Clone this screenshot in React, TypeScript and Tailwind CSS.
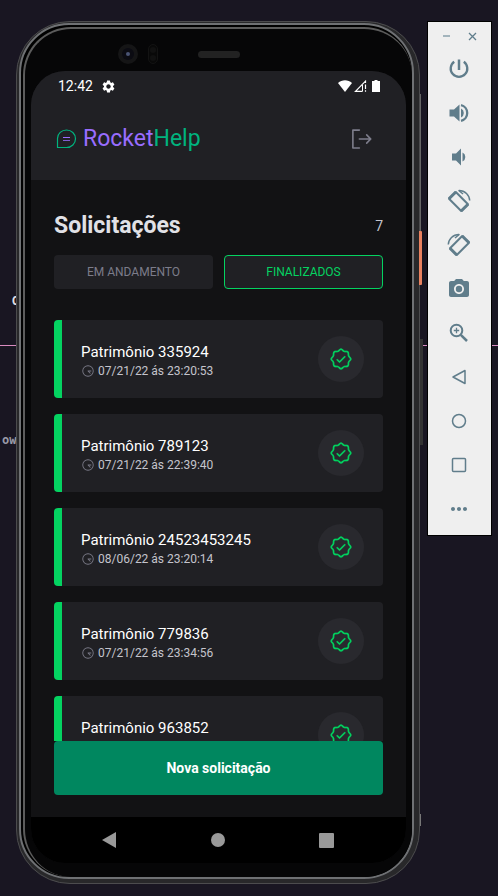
import type { ReactNode } from "react";
import { MdMoreHoriz, MdPhotoCamera, MdSettings } from "react-icons/md";
import { PiClockAfternoon, PiSealCheck, PiSignOut } from "react-icons/pi";

type Order = { id: string; patrimony: string; when: string };

const orders: Order[] = [
  { id: "1", patrimony: "335924", when: "07/21/22 ás 23:20:53" },
  { id: "2", patrimony: "789123", when: "07/21/22 ás 22:39:40" },
  { id: "3", patrimony: "24523453245", when: "08/06/22 ás 23:20:14" },
  { id: "4", patrimony: "779836", when: "07/21/22 ás 23:34:56" },
  { id: "5", patrimony: "963852", when: "07/21/22 ás 23:41:12" },
];

function Logo() {
  return (
    <div className="flex items-center gap-[6px]">
      <svg width="21" height="20" viewBox="0 0 21 20" fill="none" aria-hidden="true">
        <path
          d="M1.500 18.500V9.500C1.500 4.600 5.600 1 10.500 1S19.500 4.700 19.500 9.700s-4 8.800-9 8.800z"
          stroke="#00B37E"
          strokeWidth="1.200"
          strokeLinejoin="round"
        />
        <path d="M7 8.500h7" stroke="#996DFF" strokeWidth="1.200" />
        <path d="M7 11.500h7" stroke="#996DFF" strokeWidth="1.200" opacity="0.8" />
      </svg>
      <span className="text-[23px] leading-7 text-[#996DFF]">
        Rocket<span className="text-[#00B37E]">Help</span>
      </span>
    </div>
  );
}

function StatusBar() {
  return (
    <div className="flex h-[30px] items-center justify-between pr-[26px] pl-[27px] text-white">
      <div className="flex items-center gap-2">
        <span className="text-sm">12:42</span>
        <MdSettings size={15} />
      </div>
      <div className="flex items-center gap-[2px]">
        <svg width="14" height="12" viewBox="0 0 14 12" fill="#fff" aria-hidden="true">
          <path d="M7 12 0 3C4 -.7 10 -.7 14 3z" />
        </svg>
        <svg width="13" height="12" viewBox="0 0 13 12" fill="none" aria-hidden="true">
          <path d="M8.500 11.300H1.500L11.500 1.200V3" stroke="#fff" strokeWidth="1.200" />
          <path d="M8.500 11.300V5" stroke="#fff" />
          <path d="M11.500 4.500v4.500M11.500 10.200v1.500" stroke="#fff" strokeWidth="1.200" />
        </svg>
        <svg className="ml-[3px]" width="8" height="12" viewBox="0 0 8 12" fill="#fff" aria-hidden="true">
          <path d="M2.500 0h3v1H8v11H0V1h2.500z" />
        </svg>
      </div>
    </div>
  );
}

function OrderCard({ order }: { order: Order }) {
  return (
    <li className="shrink-0">
      <button className="flex w-full items-center overflow-hidden rounded border-l-8 border-[#04D361] bg-[#202024] pt-[22px] pr-[19px] pb-[18px] pl-[19px] text-left">
        <span className="flex-1">
          <span className="block text-[15px] leading-5 text-white">Patrimônio {order.patrimony}</span>
          <span className="flex items-center gap-[3px] text-xs leading-[18px] text-[#C4C4CC]">
            <PiClockAfternoon size={14} className="text-[#7C7C8A]" />
            {order.when}
          </span>
        </span>
        <span className="-mt-4 -mb-3 flex size-[46px] items-center justify-center rounded-full bg-[#29292E]">
          <PiSealCheck size={24} className="text-[#04D361]" stroke="currentColor" strokeWidth={2} />
        </span>
      </button>
    </li>
  );
}

function AppScreen() {
  return (
    <div className="flex min-h-0 flex-1 flex-col overflow-hidden rounded-[34px] bg-[#121214]">
      <header className="bg-[#202024]">
        <StatusBar />
        <div className="flex items-center justify-between pt-6 pr-8 pb-[27px] pl-[25px]">
          <Logo />
          <button aria-label="Sair" className="text-[#7C7C8A]">
            <PiSignOut size={26} />
          </button>
        </div>
      </header>

      <main className="flex min-h-0 flex-1 flex-col px-[23px] pt-7 pb-[22px]">
        <div className="flex items-center justify-between">
          <h1 className="text-[23px] leading-9 font-bold text-[#E1E1E6]">Solicitações</h1>
          <span className="text-sm text-[#C4C4CC]">7</span>
        </div>
        <div className="mt-[11px] grid grid-cols-2 gap-[11px] text-xs">
          <button className="h-[34px] rounded bg-[#202024] text-[#7C7C8A]">EM ANDAMENTO</button>
          <button className="h-[34px] rounded border border-[#04D361] bg-[#202024] text-[#04D361]">
            FINALIZADOS
          </button>
        </div>
        <ul className="mt-[31px] flex min-h-0 flex-1 flex-col gap-4 overflow-hidden">
          {orders.map((o) => (
            <OrderCard key={o.id} order={o} />
          ))}
        </ul>
        <button className="h-[54px] shrink-0 rounded bg-[#00875F] text-sm font-bold text-white">
          Nova solicitação
        </button>
      </main>

      <nav className="grid h-[46px] shrink-0 grid-cols-3 place-items-center bg-black pr-[25px] pl-6">
        <button aria-label="Voltar">
          <svg width="14" height="16" viewBox="0 0 14 16" fill="#999">
            <path d="M14 0v16L0 8z" />
          </svg>
        </button>
        <button aria-label="Início" className="size-[14px] rounded-full bg-[#999]" />
        <button aria-label="Recentes" className="size-[15px] rounded-[1px] bg-[#999]" />
      </nav>
    </div>
  );
}

function Phone() {
  return (
    <div className="relative flex min-w-0 flex-1">
      {/* side keys */}
      <div className="absolute top-[73px] right-0 h-[137px] w-px bg-[#666]" />
      <div className="absolute top-[210px] -right-px h-[54px] w-[3px] rounded-r-[1px] bg-[#E9815F]" />
      <div className="absolute top-[318px] -right-[2px] h-[106px] w-[3px] bg-[#333]" />
      <div className="absolute right-0 bottom-[58px] h-3 w-px bg-[#777]" />
      <div className="mr-px flex flex-1 flex-col rounded-[54px] border border-[#4c4c4e] bg-[#28282a] pt-px pr-[5px] pb-1 pl-[2px]">
        <div className="flex min-h-0 flex-1 flex-col rounded-[50px] border-2 border-[#6f7174] bg-black pt-[2px] pl-[2px]">
          <div className="flex min-h-0 flex-1 flex-col rounded-[48px] border-t-2 border-l-2 border-[#5c5c5c] bg-[#060607] pr-[6px] pb-[14px] pl-[6px]">
            <div className="grid h-[42px] shrink-0 grid-cols-[1fr_auto_1fr] items-center gap-10 pt-2">
              <div className="flex items-center justify-end gap-[10px]">
                <div className="flex size-5 items-center justify-center rounded-full bg-[#151516]">
                  <div className="flex size-3 items-center justify-center rounded-full bg-[#0b0b12]">
                    <div className="size-1 rounded-full bg-[#4a5474]" />
                  </div>
                </div>
                <div className="flex h-5 w-[10px] flex-col items-center justify-between rounded-full border border-[#131313] bg-[#090909] py-[2px]">
                  <div className="size-[6px] rounded-full bg-[#111]" />
                  <div className="size-[6px] rounded-full bg-[#111]" />
                </div>
              </div>
              <div className="h-[7px] w-[42px] rounded-full bg-[#222]" />
            </div>
            <AppScreen />
          </div>
        </div>
      </div>
    </div>
  );
}

function Glyph({ children }: { children: ReactNode }) {
  return (
    <svg width="24" height="24" viewBox="0 0 24 24" fill="none" stroke="currentColor" strokeWidth="2">
      {children}
    </svg>
  );
}

function RotateIcon({ flip }: { flip?: boolean }) {
  return (
    <svg
      width="24"
      height="24"
      viewBox="0 0 24 24"
      fill="none"
      stroke="currentColor"
      className={flip ? "-scale-x-100" : undefined}
    >
      <path d="M8.800 3 21 15.200 14.200 22 2 9.800z" strokeWidth="2" strokeLinejoin="round" />
      <path d="M8.800 3 2 9.800" strokeWidth="3" />
      <path d="M21 15.200 14.200 22" strokeWidth="3" />
      <path d="M12 1.500c6 0 10.500 4.500 10.700 10" strokeWidth="1.500" />
      <path d="M11.500 1.200 16 5" strokeWidth="1.500" />
    </svg>
  );
}

const tools: { label: string; icon: ReactNode }[] = [
  {
    label: "Power",
    icon: (
      <Glyph>
        <path d="M12 2.500V13" strokeWidth="2.500" />
        <path d="M7.200 4.800a8.300 8.300 0 1 0 9.600 0" strokeWidth="2.300" />
      </Glyph>
    ),
  },
  {
    label: "Volume up",
    icon: (
      <Glyph>
        <path d="M2.500 8.500v7h4.500l5.500 5V3.500L7 8.500z" fill="currentColor" stroke="none" />
        <path d="M14 7.500a5 5 0 0 1 0 9z" fill="currentColor" stroke="none" />
        <path d="M14 4.200a8 8 0 0 1 0 15.600" strokeWidth="2.300" />
      </Glyph>
    ),
  },
  {
    label: "Volume down",
    icon: (
      <Glyph>
        <path d="M5 8.500v7h4l5 5V3.500l-5 5z" fill="currentColor" stroke="none" />
        <path d="M15.500 7.500a5 5 0 0 1 0 9z" fill="currentColor" stroke="none" />
      </Glyph>
    ),
  },
  { label: "Rotate left", icon: <RotateIcon /> },
  { label: "Rotate right", icon: <RotateIcon flip /> },
  { label: "Take screenshot", icon: <MdPhotoCamera size={24} /> },
  {
    label: "Zoom",
    icon: (
      <Glyph>
        <circle cx="9.500" cy="9.500" r="5.800" />
        <path d="M13.800 13.800 20 20" strokeWidth="2.500" />
        <path d="M9.500 6.800v5.400M6.800 9.500h5.400" strokeWidth="1.300" />
      </Glyph>
    ),
  },
  {
    label: "Back",
    icon: (
      <svg width="16" height="16" viewBox="0 0 16 16" fill="none" stroke="currentColor" strokeWidth="1.500">
        <path d="M14 1.500v13L2 8z" strokeLinejoin="round" />
      </svg>
    ),
  },
  {
    label: "Home",
    icon: (
      <svg width="16" height="16" viewBox="0 0 16 16" fill="none" stroke="currentColor" strokeWidth="1.500">
        <circle cx="8" cy="8" r="6.500" />
      </svg>
    ),
  },
  {
    label: "Overview",
    icon: (
      <svg width="16" height="16" viewBox="0 0 16 16" fill="none" stroke="currentColor" strokeWidth="1.500">
        <rect x="1.500" y="1.500" width="13" height="13" rx="1" />
      </svg>
    ),
  },
  { label: "More", icon: <MdMoreHoriz size={24} /> },
];

function Toolbar() {
  return (
    <aside className="flex w-[65px] shrink-0 flex-col self-start border border-black bg-[#EFEFEF] pb-1 text-[#607D8B]">
      <div className="flex h-[25px] items-center justify-between px-[14px] pt-[3px]">
        <button aria-label="Minimize" className="flex size-[9px] items-center justify-center">
          <span className="block h-[2px] w-[7px] bg-[#a3b4bc]" />
        </button>
        <button aria-label="Close">
          <svg width="9" height="9" viewBox="0 0 9 9" stroke="currentColor" strokeWidth="1.300">
            <path d="M1 1l7 7M8 1 1 8" />
          </svg>
        </button>
      </div>
      {tools.map((t) => (
        <button key={t.label} aria-label={t.label} className="flex h-11 items-center justify-center pr-[2px]">
          {t.icon}
        </button>
      ))}
    </aside>
  );
}

export default function App() {
  return (
    <div className="relative isolate flex h-screen overflow-hidden bg-[#191622] pt-[21px] pr-[6px] pb-3 pl-4 font-['Roboto',sans-serif]">
      {/* editor window showing from behind the emulator */}
      <div className="absolute inset-x-0 top-[345px] -z-10 h-px bg-[#d98bc0]" />
      <span className="absolute top-[293px] left-[12px] -z-10 text-xs leading-4 font-bold text-[#E1E1E6]">C</span>
      <span className="absolute top-[432px] left-[2px] -z-10 font-['DejaVu_Sans_Mono',monospace] text-xs leading-4 font-bold text-[#9a9aa8]">
        ow
      </span>
      <Phone />
      <div className="w-[6px] shrink-0" />
      <Toolbar />
    </div>
  );
}
